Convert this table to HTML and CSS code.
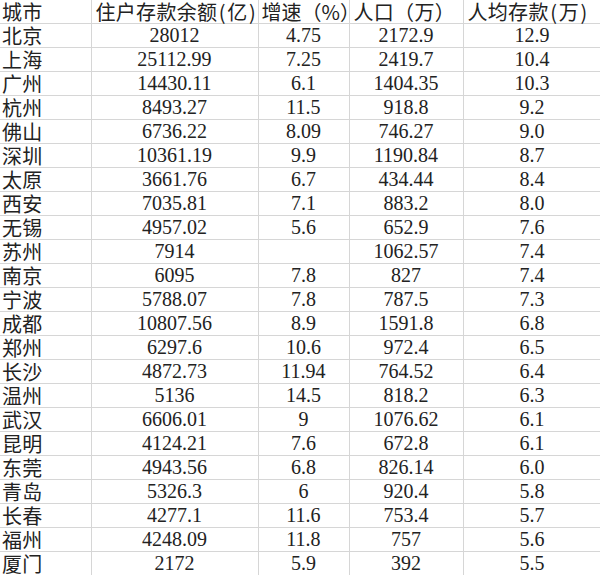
FILE: index.html
```html
<!DOCTYPE html>
<html lang="zh-CN">
<head>
<meta charset="utf-8">
<title>城市住户存款</title>
<link rel="stylesheet" href="styles.css">
</head>
<body>
<table class="sheet">
<colgroup>
<col class="c1"><col class="c2"><col class="c3"><col class="c4"><col class="c5">
</colgroup>
<thead>
<tr><th>城市</th><th>住户存款余额<span class="par">(</span>亿<span class="par">)</span></th><th class="tight">增速（%<span class="halt">）</span></th><th>人口（万）</th><th>人均存款<span class="par">(</span>万<span class="par">)</span></th></tr>
</thead>
<tbody>
<tr><td class="city">北京</td><td>28012</td><td>4.75</td><td>2172.9</td><td>12.9</td></tr>
<tr><td class="city">上海</td><td>25112.99</td><td>7.25</td><td>2419.7</td><td>10.4</td></tr>
<tr><td class="city">广州</td><td>14430.11</td><td>6.1</td><td>1404.35</td><td>10.3</td></tr>
<tr><td class="city">杭州</td><td>8493.27</td><td>11.5</td><td>918.8</td><td>9.2</td></tr>
<tr><td class="city">佛山</td><td>6736.22</td><td>8.09</td><td>746.27</td><td>9.0</td></tr>
<tr><td class="city">深圳</td><td>10361.19</td><td>9.9</td><td>1190.84</td><td>8.7</td></tr>
<tr><td class="city">太原</td><td>3661.76</td><td>6.7</td><td>434.44</td><td>8.4</td></tr>
<tr><td class="city">西安</td><td>7035.81</td><td>7.1</td><td>883.2</td><td>8.0</td></tr>
<tr><td class="city">无锡</td><td>4957.02</td><td>5.6</td><td>652.9</td><td>7.6</td></tr>
<tr><td class="city">苏州</td><td>7914</td><td></td><td>1062.57</td><td>7.4</td></tr>
<tr><td class="city">南京</td><td>6095</td><td>7.8</td><td>827</td><td>7.4</td></tr>
<tr><td class="city">宁波</td><td>5788.07</td><td>7.8</td><td>787.5</td><td>7.3</td></tr>
<tr><td class="city">成都</td><td>10807.56</td><td>8.9</td><td>1591.8</td><td>6.8</td></tr>
<tr><td class="city">郑州</td><td>6297.6</td><td>10.6</td><td>972.4</td><td>6.5</td></tr>
<tr><td class="city">长沙</td><td>4872.73</td><td>11.94</td><td>764.52</td><td>6.4</td></tr>
<tr><td class="city">温州</td><td>5136</td><td>14.5</td><td>818.2</td><td>6.3</td></tr>
<tr><td class="city">武汉</td><td>6606.01</td><td>9</td><td>1076.62</td><td>6.1</td></tr>
<tr><td class="city">昆明</td><td>4124.21</td><td>7.6</td><td>672.8</td><td>6.1</td></tr>
<tr><td class="city">东莞</td><td>4943.56</td><td>6.8</td><td>826.14</td><td>6.0</td></tr>
<tr><td class="city">青岛</td><td>5326.3</td><td>6</td><td>920.4</td><td>5.8</td></tr>
<tr><td class="city">长春</td><td>4277.1</td><td>11.6</td><td>753.4</td><td>5.7</td></tr>
<tr><td class="city">福州</td><td>4248.09</td><td>11.8</td><td>757</td><td>5.6</td></tr>
<tr><td class="city">厦门</td><td>2172</td><td>5.9</td><td>392</td><td>5.5</td></tr>
</tbody>
</table>
</body>
</html>
```

FILE: styles.css
```css
html, body {
  margin: 0;
  padding: 0;
  background: #ffffff;
}
.sheet {
  border-collapse: collapse;
  table-layout: fixed;
  width: 601px;
  color: #222222;
  font-family: "Liberation Serif", "Noto Sans CJK SC", serif;
  font-size: 20px;
}
.c1 { width: 91px; }
.c2 { width: 167px; }
.c3 { width: 91px; }
.c4 { width: 114px; }
.c5 { width: 138px; }
.sheet th,
.sheet td {
  height: 23px;
  line-height: 23px;
  padding: 0;
  border-right: 1px solid #d6d6d6;
  border-bottom: 1px solid #d6d6d6;
  white-space: nowrap;
  text-align: center;
}
.sheet th {
  font-family: "Noto Sans CJK SC", sans-serif;
  font-weight: 400;
  font-size: 20px;
  text-align: left;
  padding-left: 4px;
  letter-spacing: 0.3px;
}
.sheet th:first-child {
  padding-left: 2px;
}
.sheet th.tight {
  padding-left: 3px;
  letter-spacing: 0;
}
.halt {
  font-feature-settings: "halt" 1;
}
.par {
  display: inline-block;
  width: 10px;
  line-height: 20px;
  text-align: center;
}
.sheet td.city {
  font-family: "Noto Sans CJK SC", sans-serif;
  font-size: 20px;
  text-align: left;
  padding-left: 2px;
  letter-spacing: 0.3px;
}
```
